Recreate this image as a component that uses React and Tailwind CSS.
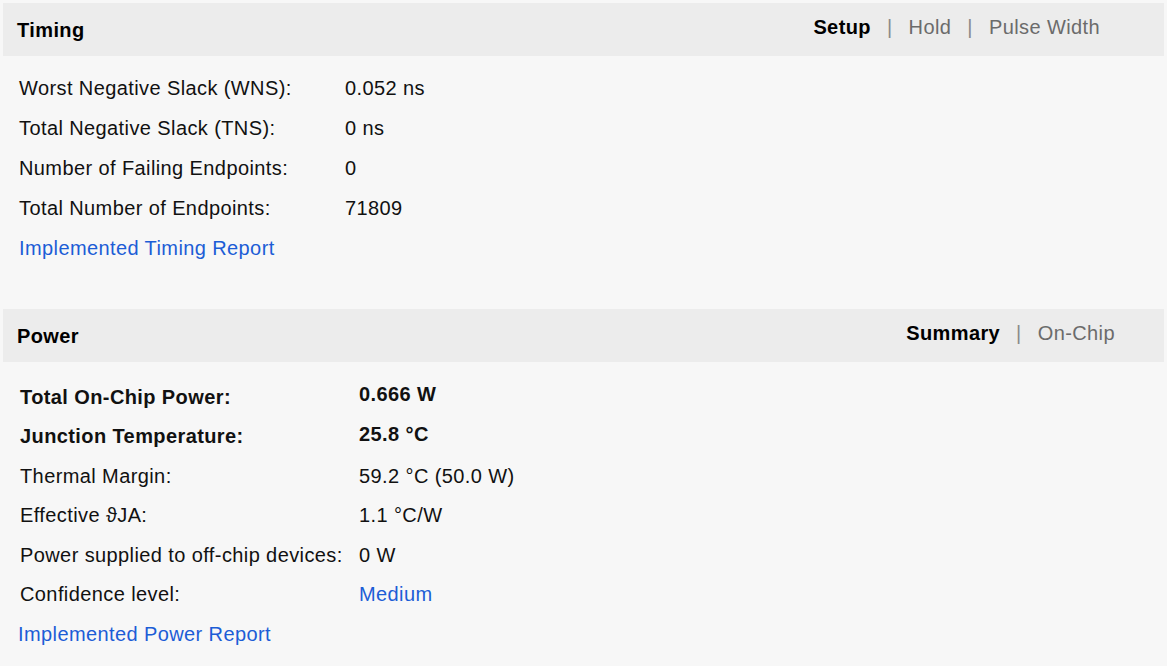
import React from "react";

const timingRows = [
  ["Worst Negative Slack (WNS):", "0.052 ns"],
  ["Total Negative Slack (TNS):", "0 ns"],
  ["Number of Failing Endpoints:", "0"],
  ["Total Number of Endpoints:", "71809"],
];

const powerRows = [
  ["Thermal Margin:", "59.2 °C (50.0 W)"],
  ["Effective ϑJA:", "1.1 °C/W"],
  ["Power supplied to off-chip devices:", "0 W"],
];

const Header = ({ title, tabs, right }) => (
  <div className={`flex items-center justify-between bg-[#ececec] h-[53px] pl-[14px] ${right}`}>
    <span className="font-bold text-[20px] text-black pt-[1px]">{title}</span>
    <div className="flex items-center text-[20px] text-[#6b6b6b] -mt-[5px]">
      {tabs.map((t, i) => (
        <React.Fragment key={t}>
          {i > 0 && <span className="text-[#8a8a8a] px-[16px]">|</span>}
          <span className={i === 0 ? "font-bold text-black" : ""}>{t}</span>
        </React.Fragment>
      ))}
    </div>
  </div>
);

const App = () => {
  return (
    <div className="min-h-[666px] bg-[#f7f7f7] p-[3px] font-['Liberation_Sans',Arial,sans-serif] text-[20px] tracking-[0.4px] text-[#111]">
      <Header title="Timing" tabs={["Setup", "Hold", "Pulse Width"]} right="pr-[64px]" />
      <div className="pl-[16px] pt-[12px] pb-[41px]">
        {timingRows.map(([k, v]) => (
          <div key={k} className="flex h-[40px] items-center">
            <span className="w-[326px]">{k}</span>
            <span>{v}</span>
          </div>
        ))}
        <div className="h-[40px] flex items-center text-[#1c5dd6]">
          Implemented Timing Report
        </div>
      </div>
      <Header title="Power" tabs={["Summary", "On-Chip"]} right="pr-[49px]" />
      <div className="pl-[17px] pt-[15px]">
        <div className="flex h-[39.5px] items-center font-bold">
          <span className="w-[339px]">Total On-Chip Power:</span>
          <span className="-mt-[5px]">0.666 W</span>
        </div>
        <div className="flex h-[39.5px] items-center font-bold">
          <span className="w-[339px]">Junction Temperature:</span>
          <span className="-mt-[5px]">25.8 °C</span>
        </div>
        {powerRows.map(([k, v]) => (
          <div key={k} className="flex h-[39.5px] items-center">
            <span className="w-[339px]">{k}</span>
            <span>{v}</span>
          </div>
        ))}
        <div className="flex h-[39.5px] items-center">
          <span className="w-[339px]">Confidence level:</span>
          <span className="text-[#1c5dd6]">Medium</span>
        </div>
        <div className="flex h-[39.5px] items-center -ml-[2px] text-[#1c5dd6]">
          Implemented Power Report
        </div>
      </div>
    </div>
  );
};

export default App;
